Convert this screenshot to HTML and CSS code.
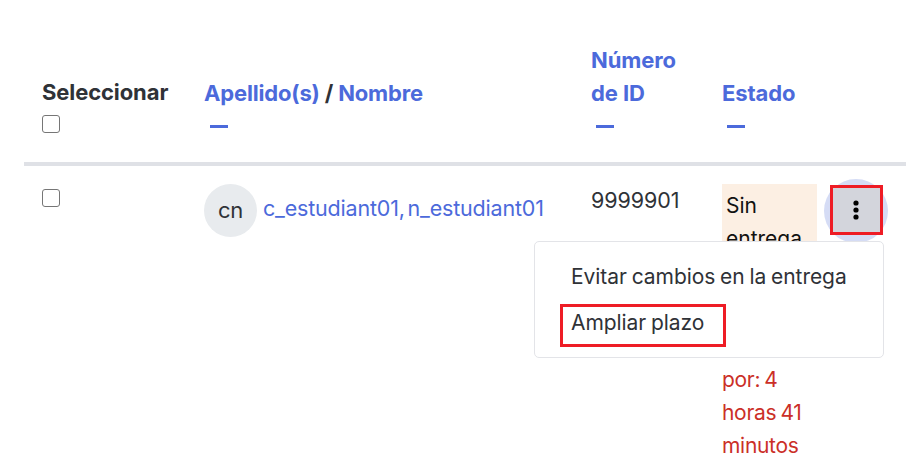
FILE: index.html
```html
<!DOCTYPE html>
<html lang="es">
<head>
<meta charset="utf-8">
<title>Entregas</title>
<link rel="stylesheet" href="styles.css">
</head>
<body>
<main class="page">
  <div class="grid head">
    <div class="cell">
      <div class="title">Seleccionar</div>
      <input class="check" type="checkbox" aria-label="Seleccionar todo">
    </div>
    <div class="cell">
      <div class="title"><a href="#">Apellido(s)</a> / <a href="#">Nombre</a></div>
      <div class="dash"></div>
    </div>
    <div class="cell">
      <div class="title"><a href="#">Número de&nbsp;ID</a></div>
      <div class="dash"></div>
    </div>
    <div class="cell">
      <div class="title"><a href="#">Estado</a></div>
      <div class="dash"></div>
    </div>
  </div>
  <div class="grid row">
    <div class="cell"><input class="check" type="checkbox" aria-label="Seleccionar"></div>
    <div class="cell user">
      <span class="avatar">cn</span>
      <a class="name" href="#">c_estudiant01, n_estudiant01</a>
    </div>
    <div class="cell idnum">9999901</div>
    <div class="cell status">
      <span class="badge">Sin entrega</span>
      <span class="late">por: 4 horas 41 minutos</span>
    </div>
    <div class="actions">
      <button class="more" type="button" aria-label="Más opciones">
        <svg width="6" height="20" viewBox="0 0 6 20"><circle cx="3" cy="3" r="2.6"/><circle cx="3" cy="10" r="2.6"/><circle cx="3" cy="17" r="2.6"/></svg>
      </button>
    </div>
  </div>
  <div class="menu">
    <a class="item" href="#">Evitar cambios en la entrega</a>
    <a class="item marked" href="#">Ampliar plazo</a>
  </div>
</main>
</body>
</html>
```
FILE: styles.css
```css
html, body {
  margin: 0;
  height: 100%;
  background: #fff;
  overflow: hidden;
}
.page {
  position: relative;
  height: 474px;
  padding-left: 24px;
  font-family: Inter, "Liberation Sans", sans-serif;
  font-size: 21px;
  line-height: 33px;
  color: #2f3237;
}
a {
  color: #4c6adb;
  text-decoration: none;
}
.grid {
  display: grid;
  grid-template-columns: 163px 386px 131px 113px 1fr;
}
.head {
  height: 162px;
  border-bottom: 4px solid #dfe1e6;
  align-items: end;
}
.cell {
  padding-left: 18px;
}
.head .cell {
  padding-bottom: 29px;
}
.title {
  font-weight: 700;
  font-size: 22px;
  letter-spacing: -0.1px;
  width: max-content;
  max-width: 100px;
}
.head .cell:nth-child(-n+2) .title {
  max-width: none;
}
.head .cell:nth-child(2) .title {
  margin-left: -1px;
  letter-spacing: -0.17px;
}
.dash {
  width: 18px;
  height: 3px;
  margin: 15px 0 5px 5px;
  background: #4c6adb;
}
.check {
  appearance: none;
  display: block;
  box-sizing: border-box;
  width: 18px;
  height: 18px;
  margin: 6px 0 0;
  border: 1.5px solid #767676;
  border-radius: 3px;
  background: #fff;
}
.row {
  padding-top: 18px;
}
.row .check {
  margin-top: 5px;
}
.user {
  display: flex;
  align-items: flex-start;
  gap: 6px;
}
.avatar {
  display: flex;
  align-items: center;
  justify-content: center;
  flex: none;
  width: 53px;
  height: 53px;
  margin-left: -1px;
  border-radius: 50%;
  background: #e8ebee;
  font-size: 22px;
  letter-spacing: -0.2px;
}
.name {
  margin-top: 8px;
  font-size: 21.5px;
  letter-spacing: -0.19px;
  word-spacing: -3px;
}
.idnum {
  font-size: 21.5px;
  letter-spacing: -0.1px;
}
.status {
  width: 95px;
  font-size: 21px;
}
.badge {
  display: block;
  padding: 5px 4px;
  background: #fcefe3;
  color: #111;
}
.late {
  display: block;
  margin-top: 103px;
  color: #cb2f27;
  font-size: 21px;
  letter-spacing: -0.3px;
  word-spacing: -1.5px;
}
.actions {
  margin-left: 7px;
  width: 64px;
  height: 64px;
  margin-top: -5px;
  border-radius: 50%;
  background: #d5dcf5;
  display: flex;
  align-items: center;
  justify-content: center;
}
.more {
  box-sizing: border-box;
  width: 53px;
  height: 50px;
  margin: -2px 0 0 1px;
  padding: 0 2px 0 0;
  border: 3px solid #ee1c25;
  background: #d3d5dc;
  display: flex;
  align-items: center;
  justify-content: center;
}
.menu {
  position: absolute;
  left: 534px;
  top: 241px;
  box-sizing: border-box;
  width: 350px;
  height: 117px;
  padding: 18px 0 0 36px;
  background: #fff;
  border: 1px solid #e3e4e8;
  border-radius: 5px;
}
.item {
  display: block;
  font-size: 21px;
  line-height: 33px;
  letter-spacing: -0.06px;
  word-spacing: -1px;
  color: #2f3237;
}
.item + .item {
  margin-top: 13px;
}
.marked {
  position: relative;
}
.marked::after {
  content: "";
  position: absolute;
  left: -11px;
  top: -2px;
  width: 160px;
  height: 37px;
  border: 3px solid #ee1c25;
}
```
